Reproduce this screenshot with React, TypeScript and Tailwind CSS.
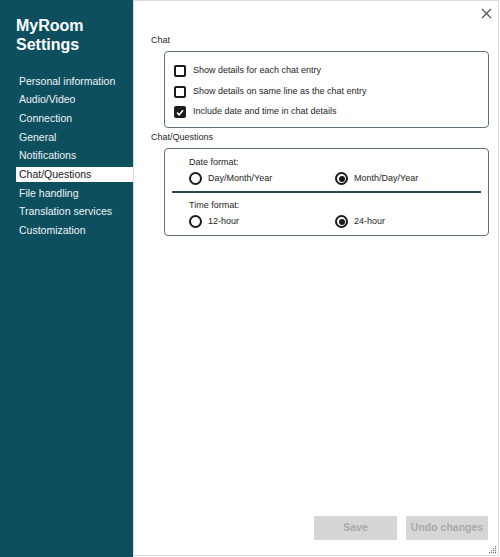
import { useState } from "react";

const navItems = [
  "Personal information",
  "Audio/Video",
  "Connection",
  "General",
  "Notifications",
  "Chat/Questions",
  "File handling",
  "Translation services",
  "Customization",
];

const Checkbox = ({ checked, label }: { checked: boolean; label: string }) => (
  <div className="flex items-center h-[12px] gap-[7px]">
    <div
      className={
        "w-[12px] h-[12px] rounded-[2px] border-2 border-[#1b1b1b] flex items-center justify-center " +
        (checked ? "bg-[#1b1b1b]" : "bg-white")
      }
    >
      {checked && (
        <svg width="9" height="9" viewBox="0 0 10 10" fill="none">
          <path d="M1.3 5.2 L4 7.8 L8.8 2.2" stroke="white" strokeWidth="2" />
        </svg>
      )}
    </div>
    <span className="text-[9px] text-[#1e1e1e]">{label}</span>
  </div>
);

const Radio = ({ checked, label }: { checked: boolean; label: string }) => (
  <div className="flex items-center h-[13px] gap-[6px]">
    <div className="w-[13px] h-[13px] rounded-full border-2 border-[#1b1b1b] flex items-center justify-center">
      {checked && <div className="w-[6px] h-[6px] rounded-full bg-[#1b1b1b]" />}
    </div>
    <span className="text-[9px] text-[#1e1e1e]">{label}</span>
  </div>
);

const App = () => {
  const [active] = useState("Chat/Questions");

  return (
    <div
      className="flex h-[557px] w-[500px] bg-white"
      style={{ fontFamily: '"Liberation Sans", Arial, sans-serif' }}
    >
      {/* Sidebar */}
      <aside className="w-[133px] h-full bg-[#0e4f5f] flex flex-col">
        <h1 className="pl-[16px] pt-[16px] text-[16px] leading-[19px] font-bold text-white">
          MyRoom
          <br />
          Settings
        </h1>
        <nav className="mt-[19.5px] flex flex-col gap-[3.7px]">
          {navItems.map((item) => (
            <div
              key={item}
              className={
                "ml-[16px] pl-[3px] h-[15px] leading-[15px] text-[10.5px] " +
                (item === active ? "bg-white text-[#1a1a1a]" : "text-[#eef3f5]")
              }
            >
              {item}
            </div>
          ))}
        </nav>
      </aside>

      {/* Main panel */}
      <main className="relative w-[366px] h-[556px] border border-[#dcdcdc] flex flex-col">
        <div className="h-[34px] flex justify-end items-start pt-[7px] pr-[6px]">
          <svg width="11" height="11" viewBox="0 0 11 11" fill="none">
            <path d="M1 1 L10 10 M10 1 L1 10" stroke="#555" strokeWidth="1.3" />
          </svg>
        </div>

        <section className="pl-[17px] pr-[9px]">
          <div className="text-[9px] leading-[11px] text-[#1e1e1e]">Chat</div>
          <div className="mt-[5px] ml-[13px] border border-[#5d707b] rounded-[4px] pt-[13px] pb-[9px] pl-[9px] flex flex-col gap-[8.5px]">
            <Checkbox checked={false} label="Show details for each chat entry" />
            <Checkbox checked={false} label="Show details on same line as the chat entry" />
            <Checkbox checked={true} label="Include date and time in chat details" />
          </div>

          <div className="mt-[4px] text-[9px] leading-[11px] text-[#1e1e1e]">Chat/Questions</div>
          <div className="mt-[5px] ml-[13px] border border-[#5d707b] rounded-[4px] px-[7px] pt-[8px] pb-[7px]">
            <div className="pl-[17px]">
              <div className="text-[9px] leading-[11px] text-[#1e1e1e]">Date format:</div>
              <div className="mt-[4px] grid grid-cols-[146px_1fr]">
                <Radio checked={false} label="Day/Month/Year" />
                <Radio checked={true} label="Month/Day/Year" />
              </div>
            </div>
            <div className="mt-[6px] h-[2px] bg-[#2f4550]" />
            <div className="pl-[17px] mt-[7px]">
              <div className="text-[9px] leading-[11px] text-[#1e1e1e]">Time format:</div>
              <div className="mt-[4px] grid grid-cols-[146px_1fr]">
                <Radio checked={false} label="12-hour" />
                <Radio checked={true} label="24-hour" />
              </div>
            </div>
          </div>
        </section>

        <div className="mt-auto flex justify-end gap-[9px] pr-[10px] pb-[15px]">
          <button className="w-[83px] h-[24px] bg-[#d6d6d6] text-[#a9a9a9] text-[10.5px] font-bold">
            Save
          </button>
          <button className="w-[82px] h-[24px] bg-[#d6d6d6] text-[#a9a9a9] text-[10.5px] font-bold">
            Undo changes
          </button>
        </div>

        {/* resize grip */}
        <svg className="absolute right-[1px] bottom-[1px]" width="9" height="9" viewBox="0 0 9 9">
          <rect x="7" y="1" width="1.2" height="1.2" fill="#777" />
          <rect x="5" y="3" width="1.2" height="1.2" fill="#777" />
          <rect x="7" y="3" width="1.2" height="1.2" fill="#777" />
          <rect x="3" y="5" width="1.2" height="1.2" fill="#777" />
          <rect x="5" y="5" width="1.2" height="1.2" fill="#777" />
          <rect x="7" y="5" width="1.2" height="1.2" fill="#777" />
          <rect x="1" y="7" width="1.2" height="1.2" fill="#777" />
          <rect x="3" y="7" width="1.2" height="1.2" fill="#777" />
          <rect x="5" y="7" width="1.2" height="1.2" fill="#777" />
          <rect x="7" y="7" width="1.2" height="1.2" fill="#777" />
        </svg>
      </main>
    </div>
  );
};

export default App;
